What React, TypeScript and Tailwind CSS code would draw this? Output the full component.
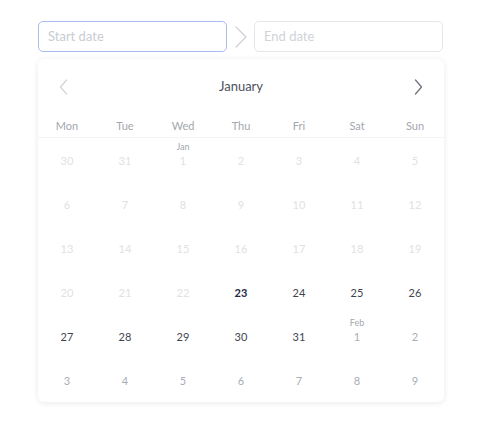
type Day = { n: number; tone: 'off' | 'on' | 'today' | 'next'; label?: string }

const weekdays = ['Mon', 'Tue', 'Wed', 'Thu', 'Fri', 'Sat', 'Sun']

const buildDays = (): Day[] => {
  const days: Day[] = [
    { n: 30, tone: 'off' },
    { n: 31, tone: 'off' },
  ]
  for (let i = 1; i <= 22; i++) days.push({ n: i, tone: 'off', label: i === 1 ? 'Jan' : undefined })
  days.push({ n: 23, tone: 'today' })
  for (let i = 24; i <= 31; i++) days.push({ n: i, tone: 'on' })
  for (let i = 1; i <= 9; i++) days.push({ n: i, tone: 'next', label: i === 1 ? 'Feb' : undefined })
  return days
}

const toneClass = {
  off: 'text-[#dfe1e5]',
  on: 'text-[#3f4550]',
  today: 'text-[#1e2a44] font-bold',
  next: 'text-[#a9adb4]',
}

// thin chevron, drawn to the size seen in the picture
const Chevron = ({ dir, className }: { dir: 'left' | 'right'; className: string }) => (
  <svg viewBox="0 0 9 16" className={className} fill="none" stroke="currentColor" strokeWidth={1.3} strokeLinecap="round" strokeLinejoin="round">
    <polyline points={dir === 'right' ? '1.5,1 7.5,8 1.5,15' : '7.5,1 1.5,8 7.5,15'} />
  </svg>
)

export default function App() {
  const days = buildDays()

  return (
    <div className="min-h-[440px] w-[487px] bg-white font-['Lato','Open_Sans',sans-serif]">
      <div className="pl-[38px] pt-[21px]">
        <div className="flex items-center">
          <div className="flex h-[31px] w-[189px] items-center rounded-[5px] border border-[#a8bcee] px-[9px] text-[13px] text-[#c9ccd3]">
            Start date
          </div>
          <div className="flex w-[27px] justify-center">
            <svg viewBox="0 0 14 22" className="h-[22px] w-[14px] text-[#cdd0d5]" fill="none" stroke="currentColor" strokeWidth={1.2} strokeLinecap="round" strokeLinejoin="round">
              <polyline points="2,1 12,11 2,21" />
            </svg>
          </div>
          <div className="flex h-[31px] w-[189px] items-center rounded-[5px] border border-[#e4e6ea] px-[9px] text-[13px] text-[#d0d3d9]">
            End date
          </div>
        </div>

        <div className="mt-[7px] w-[406px] rounded-[6px] bg-white shadow-[0_1px_6px_rgba(0,0,0,0.09)]">
          <div className="flex h-[56px] items-center justify-between px-[21px]">
            <Chevron dir="left" className="h-[16px] w-[9px] text-[#d2d5da]" />
            <span className="text-[13px] text-[#4a505a]">January</span>
            <Chevron dir="right" className="h-[16px] w-[9px] text-[#6f747c]" />
          </div>

          <div className="grid h-[23px] grid-cols-7 border-b border-[#f3f4f6] pt-[3px]">
            {weekdays.map(d => (
              <div key={d} className="text-center text-[11px] text-[#a3a7ae]">
                {d}
              </div>
            ))}
          </div>

          <div className="grid grid-cols-7">
            {days.map((d, i) => (
              <div key={i} className="flex h-[44px] items-center justify-center">
                <span className={`relative text-[11px] leading-none ${toneClass[d.tone]}`}>
                  {d.label && (
                    <span className="absolute bottom-[15px] left-1/2 -translate-x-1/2 text-[9px] font-normal text-[#a3a7ae]">
                      {d.label}
                    </span>
                  )}
                  {d.n}
                </span>
              </div>
            ))}
          </div>
        </div>
      </div>
    </div>
  )
}
